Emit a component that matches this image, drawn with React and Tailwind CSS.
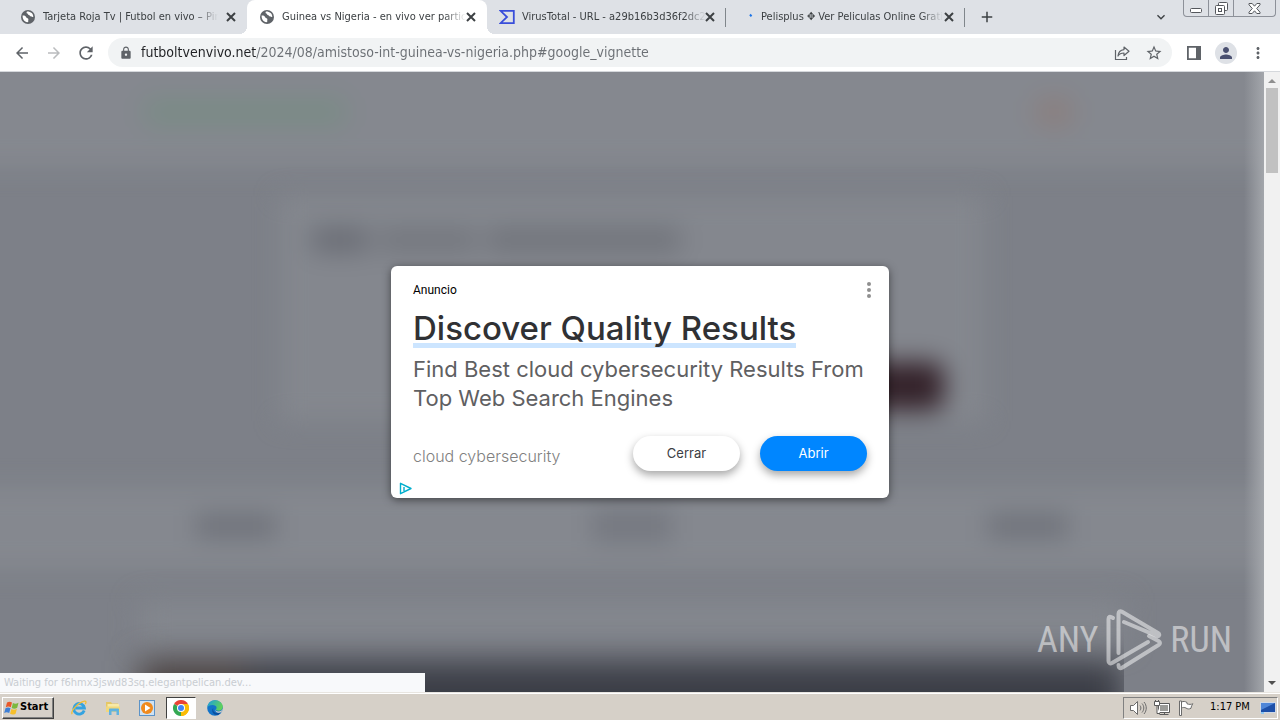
import {
    MdArrowBack,
    MdArrowForward,
    MdRefresh,
    MdLock,
    MdStarBorder,
    MdPerson,
    MdMoreVert,
    MdAdd,
    MdExpandMore,
} from 'react-icons/md'

const tabs = [
    { title: 'Tarjeta Roja Tv | Futbol en vivo – Pir', icon: 'globe' },
    { title: 'Guinea vs Nigeria - en vivo ver partic', icon: 'globe', active: true },
    { title: 'VirusTotal - URL - a29b16b3d36f2dc2', icon: 'virustotal', divider: true },
    { title: 'Pelisplus ✥ Ver Peliculas Online Grati', icon: 'spinner', divider: true },
]

/* ---------- Icons ---------- */

function GlobeIcon() {
    return (
        <svg viewBox="0 0 16 16" className="w-4 h-4">
            <circle cx="8" cy="8" r="7" fill="#5f6368" />
            <path d="M2.6 6.6c1.8-.2 3 .3 3.4 1.5.3 1 1.5.8 2.2 1.6.5.7-.2 1.6.1 2.4.2.7-.3 1.3-1 1.2C4.5 13 2.5 10.6 2.6 6.6z" fill="#fff" />
            <path d="M7 2.6c-.7.9-.6 1.7.3 2 .9.2.6 1.2 1.5 1.5 1 .3 1.2 1.3 2.3 1.3.9 0 1.2.6 2.2.5C13.3 5 11.2 2.6 7 2.6z" fill="#fff" />
        </svg>
    )
}

function VirusTotalIcon() {
    return (
        <svg viewBox="0 0 16 16" className="w-4 h-4" fill="none" stroke="#394eda" strokeWidth="1.8">
            <path d="M1.500 1.800h13.300v12.400H1.500L8 8z" />
        </svg>
    )
}

function SpinnerIcon() {
    return (
        <svg viewBox="0 0 16 16" className="w-4 h-4" fill="none" stroke="#1a73e8" strokeWidth="2">
            <path d="M12 5.500l1.500 1.800" />
        </svg>
    )
}

function CloseIcon() {
    return (
        <svg viewBox="0 0 14 14" className="w-[14px] h-[14px]" fill="none" stroke="currentColor" strokeWidth="2">
            <path d="M3 3l8 8M11 3l-8 8" />
        </svg>
    )
}

function ShareIcon() {
    return (
        <svg viewBox="0 0 16 16" className="w-4 h-4" fill="none" stroke="#5f6368" strokeWidth="1.2">
            <path d="M1.500 5v9.500h11V12" />
            <path d="M10 2l5 4.200-5 4.300V8C7 8 5.200 9 4 11c.3-3.600 2.500-6 6-6.400z" strokeLinejoin="round" />
        </svg>
    )
}

function SidePanelIcon() {
    return (
        <svg viewBox="0 0 16 16" className="w-4 h-4">
            <path d="M1 1h14v14H1zM2.800 2.800v10.400H10V2.800z" fill="#5f6368" fillRule="evenodd" />
        </svg>
    )
}

function WindowsLogo() {
    return (
        <svg viewBox="0 0 16 16" className="w-4 h-4">
            <path d="M3 2.500c1.700-1 3.300-1 5 0L6.800 7.300c-1.700-1-3.300-1-5 0z" fill="#e8582a" />
            <path d="M8.900 3c1.800 1 3.400 1 5.600-.3l-1.300 5c-2 1.200-3.700 1.200-5.500.2z" fill="#7cb83e" />
            <path d="M1.500 8.300c1.700-1 3.300-1 5 0l-1.300 4.800c-1.700-1-3.300-1-5 0z" fill="#3d7fd6" />
            <path d="M7.400 8.900c1.800 1 3.400 1 5.500-.2l-1.300 5c-2 1.200-3.700 1.100-5.500.1z" fill="#f6bf2a" />
        </svg>
    )
}

function ExplorerIcon() {
    return (
        <svg viewBox="0 0 16 16" className="w-4 h-4" fill="none">
            <path d="M13.200 10.500A5.300 5.300 0 1 1 13.400 8H4.500" stroke="#35a3e0" strokeWidth="2.8" />
            <path d="M1.200 14.200C-.8 11.500 7 2.500 13.500 1.200c1.800-.2 1.800 1.300.8 3" stroke="#f0bd35" strokeWidth="1.3" />
        </svg>
    )
}

function FolderIcon() {
    return (
        <svg viewBox="0 0 16 16" className="w-4 h-4">
            <path d="M1 2h5l1 1.500h6V12H1z" fill="#e5c765" />
            <path d="M2.500 4H14v8H2.500z" fill="#f8e9a6" />
            <path d="M1 6.500h14V12H1z" fill="#f1d87c" />
            <path d="M4 15V9.500c0-.6.4-1 1-1h8c.6 0 1 .4 1 1V15h-2.500v-3.500h-5V15z" fill="#5fb2e0" />
        </svg>
    )
}

function MediaPlayerIcon() {
    return (
        <svg viewBox="0 0 16 16" className="w-4 h-4">
            <rect x=".5" y=".5" width="15" height="15" fill="#cfe2f3" stroke="#5c93c8" />
            <circle cx="8" cy="8" r="6" fill="#f08a1d" />
            <path d="M6 4.500v7l5.500-3.500z" fill="#fff" />
        </svg>
    )
}

function ChromeIcon() {
    return (
        <svg viewBox="0 0 16 16" className="w-4 h-4">
            <path d="M8 8L1.070 4A8 8 0 0 1 14.930 4z" fill="#ea4335" />
            <path d="M8 8L14.930 4A8 8 0 0 1 8 16z" fill="#fbbc05" />
            <path d="M8 8v8A8 8 0 0 1 1.070 4z" fill="#34a853" />
            <path d="M8 4h6.930A8 8 0 0 1 8 16l3.460-6z" fill="#fbbc05" />
            <circle cx="8" cy="8" r="4" fill="#fff" />
            <circle cx="8" cy="8" r="3" fill="#4285f4" />
        </svg>
    )
}

function EdgeIcon() {
    return (
        <svg viewBox="0 0 16 16" className="w-4 h-4">
            <defs>
                <linearGradient id="edge-top" x1="0" y1="0" x2="1" y2=".4">
                    <stop offset="0" stopColor="#1b9de2" />
                    <stop offset="1" stopColor="#5fd15a" />
                </linearGradient>
            </defs>
            <circle cx="8" cy="8" r="7.8" fill="#1373c9" />
            <path d="M.3 7.500C.8 3 4 .2 8 .2c4.500 0 7.800 3 7.800 6.500 0 2.500-2 4-4.300 4-1.500 0-2.500-.5-2.500-1.200 0-.5.6-.8.6-1.700C9.600 6 7.800 5 5.500 5 2.800 5 .9 6.200.3 7.500z" fill="url(#edge-top)" />
            <path d="M6.200 8c-.8 4 3 6.500 7.600 4.200-.7 1.200-1.600 2-2.600 2.700C7 15.500 3.500 12 6.200 8z" fill="#0c4f9e" />
            <path d="M8.500 8.500c-.5 2 1 3 3 2.900 2 0 3.700-1 4.400-3-.1 1.500-.8 2.900-1.800 3.900-2.600 1.200-6.500.2-5.600-3.800z" fill="#d6d0c8" />
        </svg>
    )
}

function SpeakerIcon() {
    return (
        <svg viewBox="0 0 18 16" className="w-[18px] h-4" fill="none" stroke="#6b6b6b">
            <path d="M1.500 5.500h3l4-4v13l-4-4h-3z" fill="#fff" />
            <path d="M11 5.500c1.200 1.600 1.200 3.400 0 5M13 3.500c2.400 2.700 2.400 6.300 0 9M15 2c3 3.500 3 8.500 0 12" />
        </svg>
    )
}

function NetworkIcon() {
    return (
        <svg viewBox="0 0 16 16" className="w-4 h-4" fill="none" stroke="#5a5a5a">
            <path d="M4.500 3.500h11v9h-11z" fill="#fff" />
            <path d="M6 5h8v6H6z" fill="#9b9b98" stroke="none" />
            <path d="M5.500 14.500h9M10.500 12v2" />
            <path d="M.5 1.500v4h5v-4zM1.500 0v2M4.500 0v2M3 6v7.500h3" fill="#fff" />
        </svg>
    )
}

function FlagIcon() {
    return (
        <svg viewBox="0 0 16 16" className="w-4 h-4" fill="#fff" stroke="#6b6b6b">
            <path d="M1.500 1v14.500h2V1z" />
            <path d="M3.500 2c2-.8 3.500-.8 5.500.5v1.300c2 .8 4 .7 6 0-1 1.200-1.800 2.500-2 4.500-2 1-3.500.8-5-.3-1.500-.8-3-.7-4.500 0z" />
        </svg>
    )
}

function DesktopIcon() {
    return (
        <svg viewBox="0 0 16 16" className="w-4 h-4">
            <path d="M0 2h16v11H0z" fill="#cfd8e6" />
            <path d="M1 3h14v9H1z" fill="#1d4fa8" />
            <path d="M1 3h14L1 10z" fill="#4f86d8" />
            <path d="M1 12h3v2H1z" fill="#8ec6f0" />
        </svg>
    )
}

const favicons = { globe: GlobeIcon, virustotal: VirusTotalIcon, spinner: SpinnerIcon }

/* ---------- Browser chrome ---------- */

function Tab({ title, icon, active, divider }) {
    const Favicon = favicons[icon]
    return (
        <div
            className={
                active
                    ? 'relative z-10 flex items-center w-60 h-[34px] pl-3 pr-2 bg-white rounded-t-lg before:absolute before:bottom-0 before:-left-2 before:w-2 before:h-2 before:bg-[radial-gradient(circle_at_0_0,transparent_8px,white_8px)] after:absolute after:bottom-0 after:-right-2 after:w-2 after:h-2 after:bg-[radial-gradient(circle_at_100%_0,transparent_8px,white_8px)]'
                    : 'relative flex items-center w-[239px] h-[34px] pl-3 pr-2'
            }
        >
            <button role="tab" aria-selected={!!active} className="flex items-center flex-1 min-w-0 gap-[7px] text-left">
                <span className="shrink-0"><Favicon /></span>
                <span className="whitespace-nowrap text-[11px] leading-4 text-[#3c4043] [mask-image:linear-gradient(to_right,black_88%,transparent)]">
                    {title}
                </span>
            </button>
            <button aria-label={`Close ${title}`} className="flex items-center justify-center w-4 h-4 text-[#3c4043]">
                <CloseIcon />
            </button>
            {divider && <span className="absolute right-0 top-2 w-px h-[19px] bg-[#80868b]" />}
        </div>
    )
}

function WindowControls() {
    return (
        <div className="flex self-start h-[17px] mr-1 border border-t-0 border-[#8d9199] rounded-b-[4px] divide-x divide-[#8d9199]">
            <button aria-label="Minimize" className="flex items-center justify-center w-[25px]">
                <svg viewBox="0 0 13 5" className="w-[13px] h-[5px] mt-1" fill="#fff" stroke="#54575c">
                    <rect x=".5" y=".5" width="11" height="4" rx="1" />
                </svg>
            </button>
            <button aria-label="Restore" className="flex items-center justify-center w-[25px]">
                <svg viewBox="0 0 13 13" className="w-[13px] h-[13px]" fill="#fff" stroke="#54575c">
                    <rect x="3.500" y=".5" width="9" height="8" rx="1" />
                    <rect x=".5" y="3.500" width="9" height="9" rx="1" />
                    <rect x="3.500" y="6.500" width="3" height="3" />
                </svg>
            </button>
            <button aria-label="Close" className="flex items-center justify-center w-[41px]">
                <svg viewBox="0 0 13 11" className="w-[13px] h-[11px]" fill="#fff" stroke="#54575c">
                    <path d="M1 .5h3.200l2.300 2.700L8.800.5H12v1.300L8.700 5.500 12 9.200v1.300H8.800L6.500 7.800l-2.300 2.700H1V9.200l3.300-3.700L1 1.800z" />
                </svg>
            </button>
        </div>
    )
}

function TabStrip() {
    return (
        <div className="flex items-center h-[34px] pl-2 bg-[#dee1e6]">
            <div role="tablist" className="flex min-w-0">
                {tabs.map((tab) => <Tab key={tab.title} {...tab} />)}
            </div>
            <button aria-label="New tab" className="flex items-center justify-center w-7 h-7 ml-2 text-[#3c4043]">
                <MdAdd className="w-[18px] h-[18px]" />
            </button>
            <button aria-label="Search tabs" className="flex items-center justify-center w-7 h-7 ml-auto mr-2 text-[#3c4043]">
                <MdExpandMore className="w-4 h-4" />
            </button>
            <WindowControls />
        </div>
    )
}

function ToolButton({ label, children }) {
    return (
        <button aria-label={label} className="flex items-center justify-center shrink-0 w-8 h-7 text-[#5f6368]">
            {children}
        </button>
    )
}

function Toolbar() {
    return (
        <div className="flex items-center h-[38px] px-1.5 bg-white border-b border-[#d5d8dc]">
            <ToolButton label="Back"><MdArrowBack className="w-[18px] h-[18px]" /></ToolButton>
            <ToolButton label="Forward"><MdArrowForward className="w-[18px] h-[18px] text-[#babcbe]" /></ToolButton>
            <ToolButton label="Reload"><MdRefresh className="w-5 h-5" /></ToolButton>
            <div className="flex items-center flex-1 h-[29px] ml-1.5 mr-1.5 pl-[11px] pr-0.5 rounded-full bg-[#f1f3f4]">
                <MdLock className="w-[14px] h-[14px] mr-2 text-[#5f6368]" />
                <input
                    aria-label="Address"
                    readOnly
                    value="futboltvenvivo.net/2024/08/amistoso-int-guinea-vs-nigeria.php#google_vignette"
                    className="flex-1 min-w-0 text-[14px] text-transparent bg-clip-text bg-[linear-gradient(to_right,#202124_115px,#6b6f74_115px)] outline-none"
                />
                <ToolButton label="Share"><ShareIcon /></ToolButton>
                <ToolButton label="Bookmark"><MdStarBorder className="w-[18px] h-[18px]" /></ToolButton>
            </div>
            <ToolButton label="Side panel"><SidePanelIcon /></ToolButton>
            <ToolButton label="Profile">
                <span className="flex items-center justify-center w-[22px] h-[22px] rounded-full bg-[#dee1e6]">
                    <MdPerson className="w-[18px] h-[18px] text-[#4a5070]" />
                </span>
            </ToolButton>
            <ToolButton label="Menu"><MdMoreVert className="w-[18px] h-[18px]" /></ToolButton>
        </div>
    )
}

/* ---------- Page ---------- */

// The site behind the ad, dimmed and out of focus
function BlurredSite() {
    return (
        <div aria-hidden="true" className="absolute inset-0 overflow-hidden bg-[#7d8088]">
            <div className="flex flex-col h-[640px] pr-4">
                <div className="-mt-8 -mx-8 h-[130px] pt-8 bg-[#85888f] blur-[12px]">
                    <div className="flex items-center justify-between h-20 mx-auto w-[975px]">
                        <div className="w-[200px] h-6 bg-[#788c84] blur-[6px]" />
                        <div className="w-9 h-7 mr-12 bg-[#8b7f7e] blur-[4px]" />
                    </div>
                </div>
                <div className="mt-7 mx-auto w-[704px] h-[228px] bg-[#84878e] blur-[12px]">
                    <div className="flex gap-3 pt-8 pl-8">
                        <div className="w-14 h-6 bg-[#696c74] blur-[4px]" />
                        <div className="w-24 h-6 bg-[#73767d] blur-[4px]" />
                        <div className="w-48 h-6 bg-[#70737a] blur-[4px]" />
                    </div>
                    <div className="w-24 h-12 mt-[110px] ml-auto mr-10 rounded-xl bg-[#34222a] blur-[3px]" />
                </div>
                <div className="flex items-center justify-between -mx-8 mt-[66px] h-[84px] px-[228px] pb-1 bg-[#85888f] blur-[12px]">
                    <div className="w-20 h-6 bg-[#6f727a]" />
                    <div className="w-20 h-8 bg-[#757880]" />
                    <div className="w-20 h-6 bg-[#6f727a]" />
                </div>
                <div className="mt-8 mx-auto w-[984px] h-[44px] bg-[#84878e] blur-[14px]" />
                <div className="-mt-10 ml-[76px] w-[1048px] h-[108px] pl-16 pt-[56px] overflow-hidden">
                    <div className="flex h-32 blur-[16px]">
                        <div className="w-[106px] bg-[#4a4140]" />
                        <div className="flex-1 bg-[#3b3d46]" />
                    </div>
                </div>
            </div>
            <div className="absolute top-0 right-4 w-5 h-full bg-gradient-to-r from-transparent to-[#a3a6ab]" />
        </div>
    )
}

function Scrollbar() {
    return (
        <div className="relative flex flex-col items-center justify-between w-4 h-full ml-auto bg-[#f1f1f1]">
            <div className="flex flex-col items-center">
                <svg viewBox="0 0 16 16" className="w-4 h-4"><path d="M4 11h8L8 7z" fill="#8f8f8f" /></svg>
                <div className="w-3 h-[85px] bg-[#c1c1c1]" />
            </div>
            <svg viewBox="0 0 16 16" className="w-4 h-4"><path d="M4 5h8l-4 4z" fill="#505050" /></svg>
        </div>
    )
}

function AdDialog() {
    return (
        <div role="dialog" aria-label="Anuncio" className="relative w-[498px] h-[232px] px-[22px] pt-4 bg-white rounded-md shadow-[0_2px_8px_rgba(0,0,0,0.5)] font-['Inter',sans-serif]">
            <div className="flex items-center justify-between h-4 -mr-1">
                <span className="text-[12px] leading-4 text-black font-['Roboto',sans-serif]">Anuncio</span>
                <button aria-label="Más opciones" className="flex flex-col justify-between items-center w-1 h-4">
                    <span className="w-1 h-1 rounded-full bg-[#8f8f8f]" />
                    <span className="w-1 h-1 rounded-full bg-[#8f8f8f]" />
                    <span className="w-1 h-1 rounded-full bg-[#8f8f8f]" />
                </button>
            </div>
            <h1 className="mt-3 h-[38px]">
                <a href="#abrir" className="inline-block h-[38px] border-b-[5px] border-[#cce5ff] text-[33px] leading-[36px] font-medium text-[#303134] whitespace-nowrap">
                    Discover Quality Results
                </a>
            </h1>
            <p className="mt-[7px] -mr-2 text-[22px] leading-[29px] text-[#5f6062]">
                Find Best cloud cybersecurity Results From Top Web Search Engines
            </p>
            <div className="flex items-center mt-[23px]">
                <a href="#abrir" className="mr-auto pt-1 text-[16px] font-light text-[#808080]">cloud cybersecurity</a>
                <button className="w-[107px] h-[35px] rounded-full bg-white text-[13px] text-[#3c4043] shadow-[0_4px_8px_rgba(0,0,0,0.35)]">
                    Cerrar
                </button>
                <button className="w-[107px] h-[35px] ml-5 rounded-full bg-[#0086ff] text-[13px] text-white shadow-[0_4px_8px_rgba(0,0,0,0.35)]">
                    Abrir
                </button>
            </div>
            <a href="#adchoices" aria-label="AdChoices" className="absolute left-2 bottom-[3px]">
                <svg viewBox="0 0 13 13" className="w-[13px] h-[13px]" fill="none" stroke="#00aecd" strokeWidth="1.4">
                    <path d="M1.500 1.300v10.400L12 6.500z" strokeLinejoin="round" />
                    <path d="M5 5v4" />
                </svg>
            </a>
        </div>
    )
}

function Watermark() {
    return (
        <div className="absolute right-12 bottom-5 flex items-center gap-2 text-white/50 text-[36px] leading-[64px] font-['Liberation_Sans_Narrow','Roboto_Condensed',sans-serif]">
            <span>ANY</span>
            <svg viewBox="0 0 56 62" className="w-14 h-[62px]" fill="none" stroke="currentColor" strokeWidth="4" strokeLinecap="round" strokeLinejoin="round">
                <path d="M7 9C3.500 6.500 2.500 8 2.500 10V52c0 2 1.500 3 3.500 2L42 33" />
                <path d="M12.500 44V5c0-2.500 1.500-3.500 3.500-2.300L52 24c2 1.300 1.500 3-.5 3.200L18 13" />
                <path d="M12.500 56c0 3 1.500 3.800 3.500 2.700L52.500 36c2-1.300 2-2.700 0-4L43 27" />
            </svg>
            <span>RUN</span>
        </div>
    )
}

/* ---------- Taskbar ---------- */

function Taskbar() {
    return (
        <div className="flex items-center h-7 pl-0.5 pr-0.5 pt-0.5 bg-[#d6d0c8] border-t border-[#e8e5e0] shadow-[inset_0_1px_0_#fff]">
            <button className="flex items-center w-[52px] h-[22px] pl-px text-[11px] font-bold text-black border border-t-white border-l-white border-r-[#404040] border-b-[#404040] shadow-[inset_-1px_-1px_0_#808080]">
                <WindowsLogo />
                <span>Start</span>
            </button>
            <div className="flex items-center ml-[10px] gap-1">
                <button aria-label="Internet Explorer" className="flex items-center justify-center w-[30px] h-[22px]"><ExplorerIcon /></button>
                <button aria-label="Windows Explorer" className="flex items-center justify-center w-[30px] h-[22px]"><FolderIcon /></button>
                <button aria-label="Media Player" className="flex items-center justify-center w-[30px] h-[22px]"><MediaPlayerIcon /></button>
                <button aria-label="Chrome" className="flex items-center justify-center w-[30px] h-[22px] bg-white border border-t-[#404040] border-l-[#404040] border-r-white border-b-white"><ChromeIcon /></button>
                <button aria-label="Edge" className="flex items-center justify-center w-[30px] h-[22px]"><EdgeIcon /></button>
            </div>
            <div className="flex items-center h-[22px] ml-auto pl-[5px] border border-t-[#808080] border-l-[#808080] border-r-white border-b-white">
                <SpeakerIcon />
                <span className="ml-[7px]"><NetworkIcon /></span>
                <span className="ml-2"><FlagIcon /></span>
                <span className="ml-4 w-[42px] text-[11px] text-black whitespace-nowrap">1:17 PM</span>
                <button aria-label="Show desktop" className="ml-2 mr-px"><DesktopIcon /></button>
            </div>
        </div>
    )
}

export default function App() {
    return (
        <div className="flex flex-col min-h-screen overflow-hidden font-['DejaVu_Sans_Condensed','DejaVu_Sans',sans-serif]">
            <TabStrip />
            <Toolbar />
            <main className="relative flex flex-1">
                <BlurredSite />
                <div className="relative flex w-full">
                    <Scrollbar />
                </div>
                <div className="absolute inset-0 flex items-center justify-center">
                    <AdDialog />
                </div>
                <Watermark />
                <div className="absolute left-0 bottom-0 w-[425px] h-[19px] pl-1 bg-[#f8f9fb] text-[11px] leading-[19px] text-[#c9cdd2]">
                    Waiting for f6hmx3jswd83sq.elegantpelican.dev...
                </div>
            </main>
            <Taskbar />
        </div>
    )
}
